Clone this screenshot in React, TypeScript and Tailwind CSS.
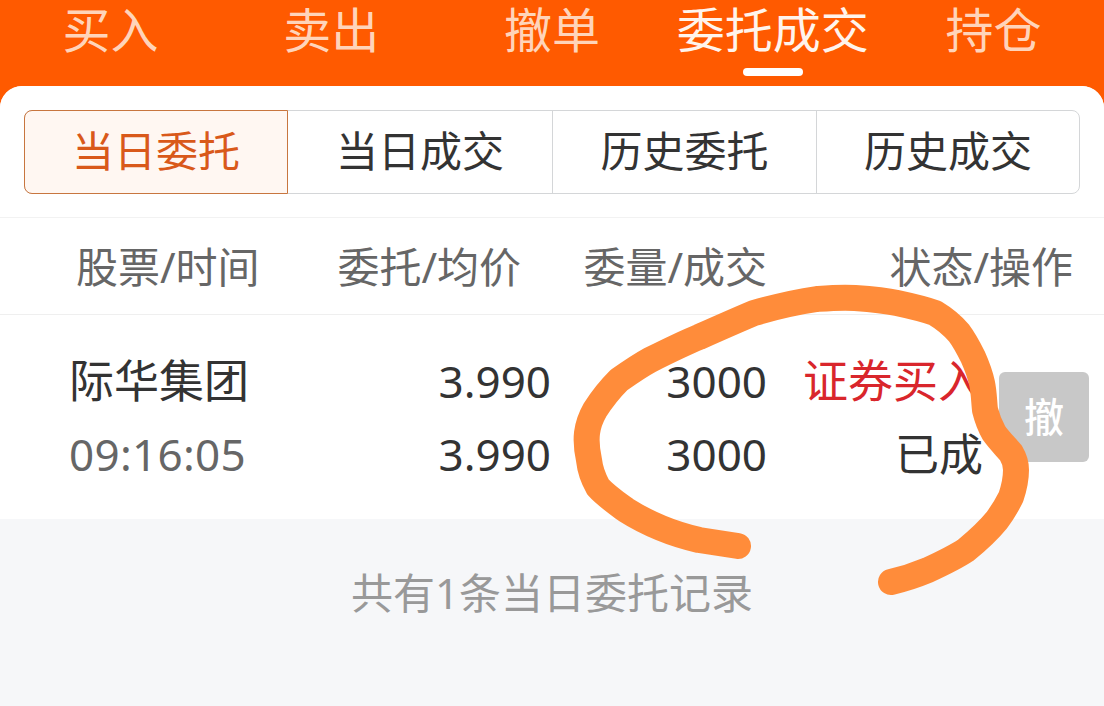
import React from "react";

const tabs = ["买入", "卖出", "撤单", "委托成交", "持仓"];
const segments = ["当日委托", "当日成交", "历史委托", "历史成交"];
const font = "font-['Noto_Sans','Noto_Sans_CJK_SC',sans-serif]";

function TopTabs() {
    return (
        <div className="grid grid-cols-5 h-[86px] bg-[#ff5a00]">
            {tabs.map((tab, i) => (
                <div key={tab} className="flex flex-col items-center">
                    <div className={`h-[60px] text-[48px] leading-[60px] ${i === 3 ? "text-[#fff4ec]" : "text-[#ffd4ba]"}`}>
                        {tab}
                    </div>
                    {i === 3 && <div className="mt-2 w-[60px] h-2 rounded-full bg-white" />}
                </div>
            ))}
        </div>
    );
}

function Segments() {
    return (
        <div className="h-[132px] px-6 pt-6 border-b border-[#f2f2f2]">
            <div className="flex h-[84px] rounded-lg border border-[#d4d6d8]">
                {segments.map((s, i) =>
                    i === 0 ? (
                        <div key={s} className="w-[264px] -my-px -ml-px pb-1 flex items-center justify-center rounded-l-lg border border-[#c8763f] bg-[#fff7f2] text-[42px] text-[#d9591a]">
                            {s}
                        </div>
                    ) : (
                        <div key={s} className={`pb-1 flex items-center justify-center text-[42px] text-[#333333] ${i === 3 ? "flex-1" : "w-[264px]"} ${i > 1 ? "border-l border-[#d4d6d8]" : ""}`}>
                            {s}
                        </div>
                    )
                )}
            </div>
        </div>
    );
}

function TableHeader() {
    return (
        <div className="flex items-center h-[97px] border-b border-[#efefef] text-[42px] text-[#666666]">
            <div className="w-[258px] pl-[76px] whitespace-nowrap">股票/时间</div>
            <div className="w-[263px] text-right whitespace-nowrap">委托/均价</div>
            <div className="w-[246px] text-right whitespace-nowrap">委量/成交</div>
            <div className="w-[306px] text-right whitespace-nowrap">状态/操作</div>
        </div>
    );
}

function OrderRow() {
    return (
        <div className="flex items-center h-[204px] bg-white text-[44px] text-[#333333]">
            <div className="w-[250px] pl-[69px] flex flex-col gap-[13px] leading-[60px] whitespace-nowrap">
                <div className="text-[45px]">际华集团</div>
                <div className="text-[#666666] tracking-[0.3px]">09:16:05</div>
            </div>
            <div className="w-[301px] flex flex-col gap-[13px] leading-[60px] text-right">
                <div>3.990</div>
                <div>3.990</div>
            </div>
            <div className="w-[216px] flex flex-col gap-[13px] leading-[60px] text-right">
                <div>3000</div>
                <div>3000</div>
            </div>
            <div className="w-[216px] flex flex-col gap-[13px] leading-[60px] text-right whitespace-nowrap">
                <div className="text-[45px] text-[#d9262c]">证券买入</div>
                <div>已成</div>
            </div>
            <div className="ml-4 w-[90px] h-[90px] rounded-md bg-[#c8c8c8] flex items-center justify-center text-[40px] font-medium text-white">
                撤
            </div>
        </div>
    );
}

export default function App() {
    return (
        <div className={`relative w-[1104px] h-[706px] overflow-hidden bg-[#ff5a00] ${font}`}>
            <TopTabs />
            <div className="h-[620px] rounded-t-[22px] overflow-hidden bg-[#f6f7f9]">
                <div className="bg-white">
                    <Segments />
                    <TableHeader />
                    <OrderRow />
                </div>
                <div className="pt-11 text-center text-[42px] leading-[60px] text-[#999999]">共有1条当日委托记录</div>
            </div>
            {/* hand drawn circle on top of the screenshot */}
            <svg className="absolute inset-0 pointer-events-none" width="1104" height="706" viewBox="0 0 1104 706" fill="none">
                <path
                    d="M738 546C725 544 712 542 699 540C686 537 673 533 661 528C649 523 637 517 626 510C615 502 605 495 598 487C593 478 590 469 589 460C587 451 586 442 587 433C588 425 591 417 595 410C602 399 610 389 619 380C629 373 639 366 650 360C666 352 682 344 699 337C717 329 735 321 754 313C775 307 796 302 817 299C830 298 842 297 855 298C869 299 883 300 897 303C911 306 924 309 935 313C945 319 953 326 959 333C965 341 969 349 973 357C977 366 980 374 982 383C984 392 984 401 985 410C987 418 990 426 994 433C999 440 1005 446 1011 453C1014 458 1016 464 1016 470C1016 479 1014 488 1011 497C1007 505 1002 513 997 520C988 531 977 541 966 550C954 558 941 564 928 570C916 575 904 579 891 582"
                    stroke="#ff8c3a"
                    strokeWidth="26"
                    strokeLinecap="round"
                    strokeLinejoin="round"
                />
            </svg>
        </div>
    );
}
